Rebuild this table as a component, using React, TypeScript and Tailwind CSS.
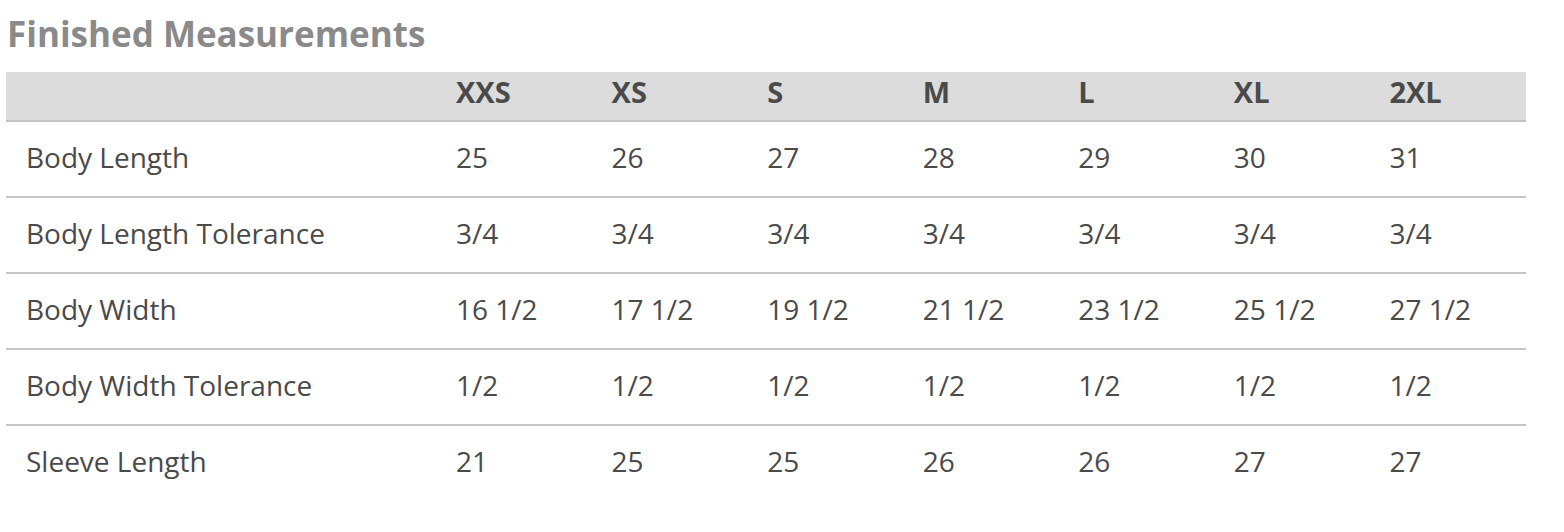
const sizes = ['XXS', 'XS', 'S', 'M', 'L', 'XL', '2XL']

const rows: { label: string; values: string[] }[] = [
  { label: 'Body Length', values: ['25', '26', '27', '28', '29', '30', '31'] },
  { label: 'Body Length Tolerance', values: ['3/4', '3/4', '3/4', '3/4', '3/4', '3/4', '3/4'] },
  { label: 'Body Width', values: ['16 1/2', '17 1/2', '19 1/2', '21 1/2', '23 1/2', '25 1/2', '27 1/2'] },
  { label: 'Body Width Tolerance', values: ['1/2', '1/2', '1/2', '1/2', '1/2', '1/2', '1/2'] },
  { label: 'Sleeve Length', values: ['21', '25', '25', '26', '26', '27', '27'] },
]

export default function App() {
  return (
    <div className="min-h-[532px] bg-white pl-[6px] pr-[38px] font-['Open_Sans',sans-serif] text-[#4a4a4a]">
      <h2 className="pt-[14px] pl-[1px] text-[35px] leading-[40px] font-bold text-[#8a8a8a]">
        Finished Measurements
      </h2>

      <div className="mt-[18px]">
        <div className="grid h-[50px] grid-cols-[431px_repeat(7,1fr)] border-b-2 border-[#c2c2c2] bg-[#dcdcdc] pt-[4px] text-[29px] leading-[32px] font-bold">
          <div />
          {sizes.map((size) => (
            <div key={size} className="pl-[19px]">
              {size}
            </div>
          ))}
        </div>

        {rows.map((row, i) => (
          <div
            key={row.label}
            className={
              i < rows.length - 1
                ? 'grid h-[76px] grid-cols-[431px_repeat(7,1fr)] border-b-2 border-[#c6c6c6] pt-[19px] text-[28px] leading-[32px]'
                : 'grid h-[76px] grid-cols-[431px_repeat(7,1fr)] pt-[19px] text-[28px] leading-[32px]'
            }
          >
            <div className="pl-[20px]">{row.label}</div>
            {row.values.map((value, j) => (
              <div key={j} className="pl-[19px]">
                {value}
              </div>
            ))}
          </div>
        ))}
      </div>
    </div>
  )
}
